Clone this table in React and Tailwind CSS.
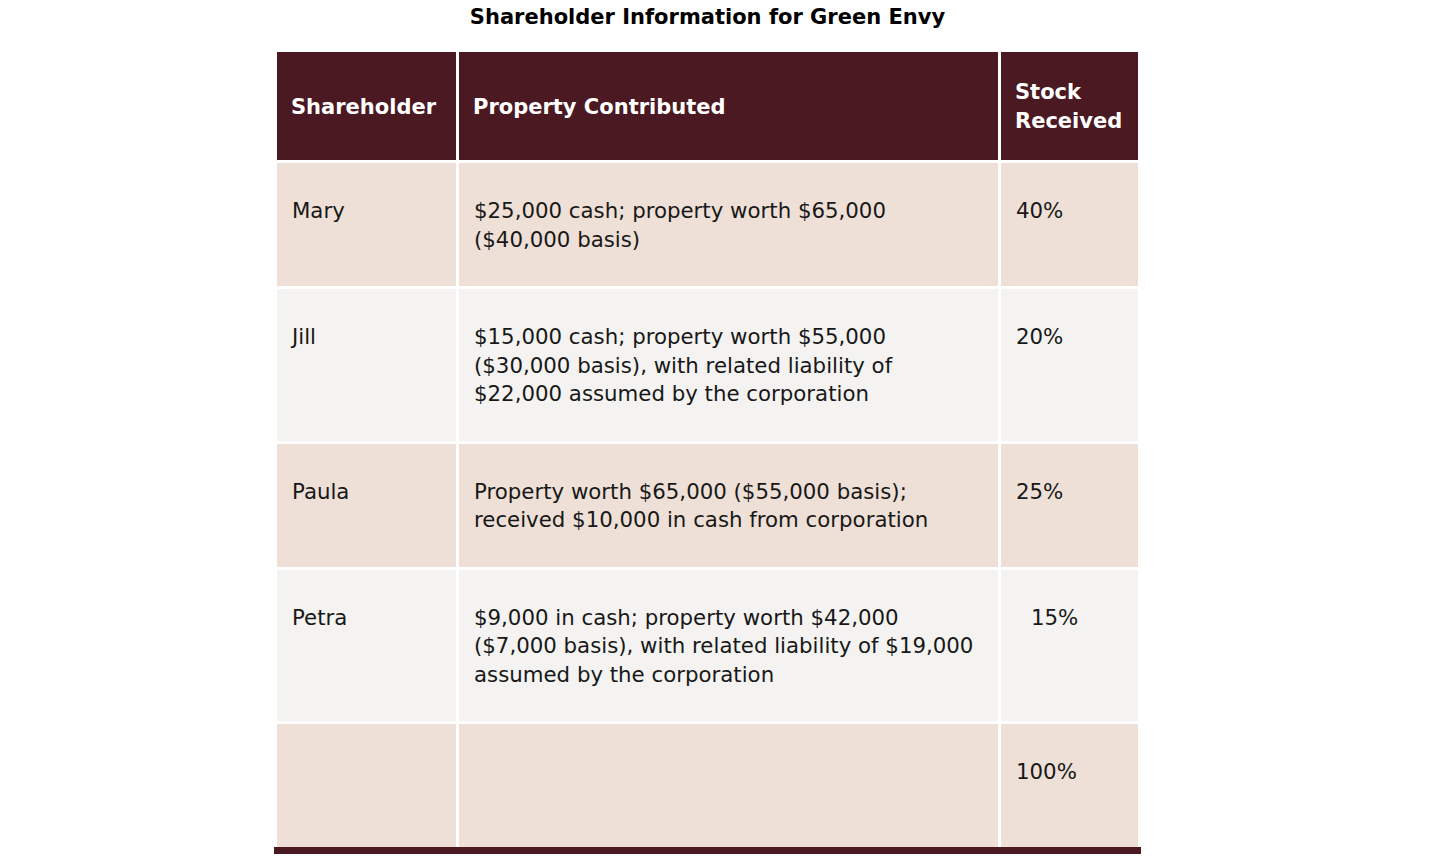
import React from 'react';

const rows = [
  {
    name: 'Mary',
    lines: ['$25,000 cash; property worth $65,000', '($40,000 basis)'],
    stock: '40%',
    bg: 'bg-[#eee0d6]',
  },
  {
    name: 'Jill',
    lines: [
      '$15,000 cash; property worth $55,000',
      '($30,000 basis), with related liability of',
      '$22,000 assumed by the corporation',
    ],
    stock: '20%',
    bg: 'bg-[#f4f3f1]',
  },
  {
    name: 'Paula',
    lines: ['Property worth $65,000 ($55,000 basis);', 'received $10,000 in cash from corporation'],
    stock: '25%',
    bg: 'bg-[#eee0d6]',
  },
  {
    name: 'Petra',
    lines: [
      '$9,000 in cash; property worth $42,000',
      '($7,000 basis), with related liability of $19,000',
      'assumed by the corporation',
    ],
    stock: '15%',
    indent: true,
    bg: 'bg-[#f4f3f1]',
  },
];

function HeadCell({ children }) {
  return (
    <div className="flex items-center bg-[#4b1922] px-[14px] pt-[26px] pb-[24px] text-[21px] font-bold leading-[29px] text-white">
      <div>{children}</div>
    </div>
  );
}

function BodyCell({ bg, children, tall }) {
  return (
    <div className={`${bg} px-[15px] pt-[34px] pb-[32px] text-[21.3px] leading-[28.5px] text-[#181818] ${tall ? 'min-h-[123px]' : ''}`}>
      {children}
    </div>
  );
}

export default function App() {
  return (
    <div className="w-[1415px] bg-white" style={{ fontFamily: '"DejaVu Sans", Verdana, sans-serif' }}>
      <div className="flex flex-col items-center">
        <h1 className="mt-[2px] mb-[20px] text-[21px] font-bold leading-[30px] text-black">
          Shareholder Information for Green Envy
        </h1>

        {/* table */}
        <div className="grid w-[867px] grid-cols-[179px_539px_137px] gap-[3px] border-b-[7px] border-[#4b1922] px-[3px] pt-0">
          <HeadCell>Shareholder</HeadCell>
          <HeadCell>Property Contributed</HeadCell>
          <HeadCell>
            Stock
            <br />
            Received
          </HeadCell>

          {rows.map((r) => (
            <React.Fragment key={r.name}>
              <BodyCell bg={r.bg}>{r.name}</BodyCell>
              <BodyCell bg={r.bg}>
                {r.lines.map((l) => (
                  <div key={l} className="whitespace-nowrap">
                    {l}
                  </div>
                ))}
              </BodyCell>
              <BodyCell bg={r.bg}>
                <span className={r.indent ? 'pl-[15px]' : ''}>{r.stock}</span>
              </BodyCell>
            </React.Fragment>
          ))}

          <BodyCell bg="bg-[#eee0d6]" tall />
          <BodyCell bg="bg-[#eee0d6]" tall />
          <BodyCell bg="bg-[#eee0d6]" tall>
            100%
          </BodyCell>
        </div>
      </div>
    </div>
  );
}
